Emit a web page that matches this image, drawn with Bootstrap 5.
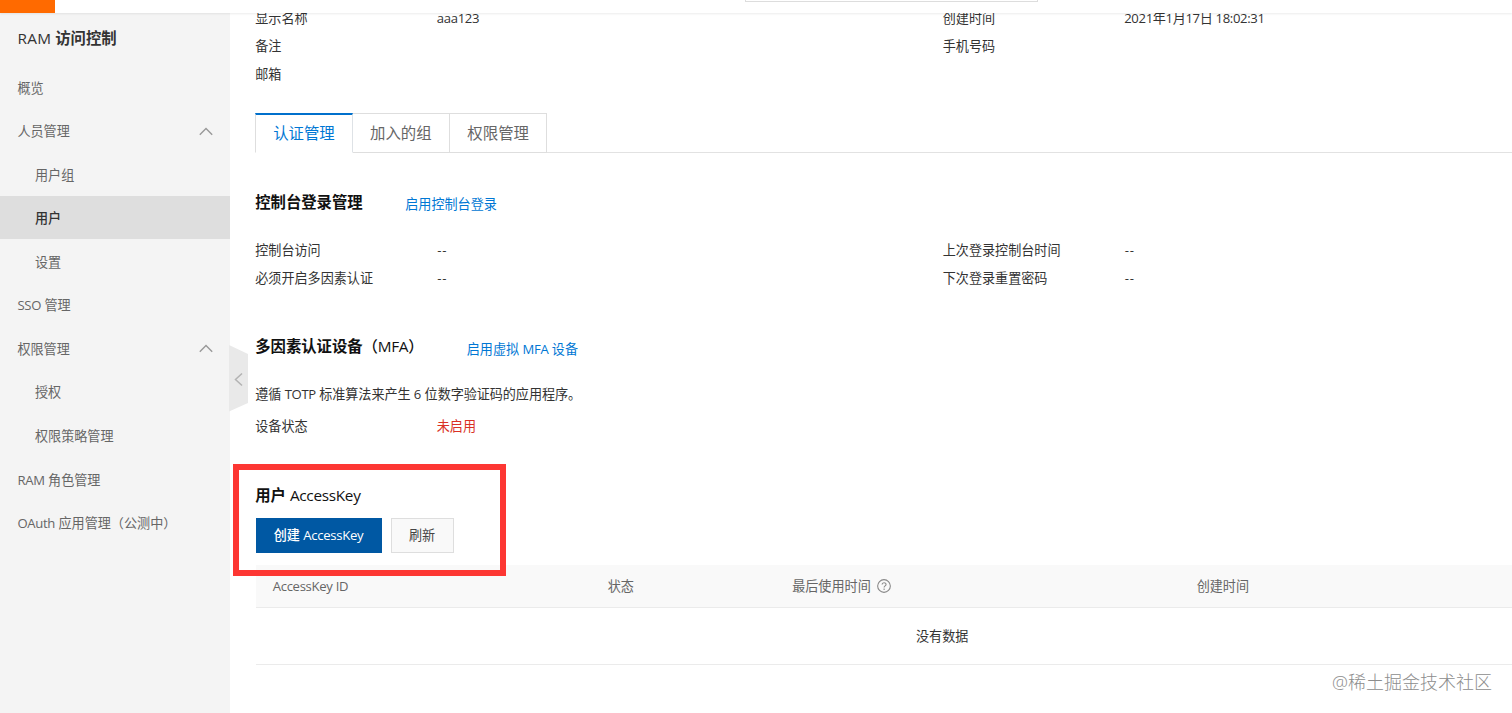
<!DOCTYPE html>
<html lang="zh-CN">
<head>
<meta charset="utf-8">
<meta name="viewport" content="width=device-width, initial-scale=1">
<title>RAM 访问控制</title>
<link href="https://cdn.jsdelivr.net/npm/bootstrap@5.3.0/dist/css/bootstrap.min.css" rel="stylesheet">
<style>
body{height:713px;font-family:"Open Sans","Noto Sans CJK SC",sans-serif;font-size:13.1px;color:#333;line-height:28px}
.lat{letter-spacing:-.3px}
.date-text{letter-spacing:-.34px}
.dash{padding-left:.5px;letter-spacing:.8px}
.topbar{height:13px;z-index:2;box-shadow:0 1px 2px rgba(0,0,0,.08)}
.brand-block{width:55px;background:#ff6a00}
.search-box{width:293px;height:2px;left:745px;border:1px solid #ddd;border-top:0}
.side{width:229.500px;background:#f4f4f4}
.side-title{height:52.300px;padding:11px 0 0 17.400px;font-size:15.350px;font-weight:700;color:#333}
.side-title .lat{font-weight:500;letter-spacing:.3px}
.side .list-group-item{height:43.640px;padding:1px 17px 0 17.400px;background:transparent;color:#666;border:0;border-radius:0}
.side .sub-item{padding-left:35px}
.side .list-group-item.active{background:#dedede;color:#333;font-weight:500;margin-top:-.5px}
.handle{left:229px;top:332px;z-index:1}
.content-area{padding-left:26px}
.info{display:grid;grid-template-columns:181.500px 506px 181.500px 1fr;margin-left:-.3px}
.info.first{margin-top:-9px;height:84px}
.nav-tabs{margin-top:25px;height:40px;margin-left:-.3px;--bs-nav-tabs-border-color:#e2e2e2}
.nav-tabs .nav-link{width:97.300px;height:40px;padding:0;border:1px solid #dedede;border-left:0;border-radius:0;margin:0;font-size:15.400px;color:#666;line-height:39px;text-align:center}
.nav-tabs .nav-link.active{border-left:1px solid #dedede;border-top:2px solid #0070cc;border-bottom-color:#fff;color:#0077d4;width:97.500px;line-height:37px}
.sec{height:30px;font-size:15.350px;font-weight:700;color:#111;line-height:30px;margin-left:-.3px}
.sec .lat{font-weight:500}
.sec a{font-size:13.100px;font-weight:400;color:#0077d4;padding-top:2px}
.danger-text{color:#d93026}
.btn-key{height:35px;border-radius:0;font-size:13.100px;line-height:33px;padding:0}
.btn-create{width:126px;background:#0058a3;color:#fff;font-weight:500}
.btn-refresh{width:63px;background:#f9f9f9;border-color:#dedede;color:#444}
.key-head{height:43px;margin-top:12px;background:#f9f9f9;border-bottom:1px solid #ebebeb;color:#666;display:grid;grid-template-columns:335px 184.500px 404.500px 1fr;padding-left:17.200px;line-height:42px}
.key-empty{height:57px;border-bottom:1px solid #ebebeb;padding-left:660.500px;line-height:56px}
.frame{left:233px;top:464px;width:273px;height:112px;border:6px solid #fd3733;z-index:3}
.wm{right:20px;bottom:17px;font-size:18px;color:#8d8d8d;font-weight:300;line-height:28px}
</style>
</head>
<body class="d-flex flex-column overflow-hidden position-relative bg-white">
<header class="topbar bg-white d-flex flex-shrink-0 position-relative">
  <div class="brand-block"></div>
  <div class="search-box position-absolute top-0"></div>
</header>
<div class="d-flex flex-grow-1 overflow-hidden position-relative">
  <aside class="side flex-shrink-0">
    <div class="side-title"><span class="lat">RAM</span> 访问控制</div>
    <div class="list-group list-group-flush">
      <a class="list-group-item d-flex align-items-center">概览</a>
      <a class="list-group-item d-flex align-items-center justify-content-between">人员管理<svg width="14" height="9" viewBox="0 0 14 9" fill="none" stroke="#999" stroke-width="1.4"><path d="M.8 7.700 7 1.500l6.200 6.200"/></svg></a>
      <a class="list-group-item sub-item d-flex align-items-center">用户组</a>
      <a class="list-group-item sub-item active d-flex align-items-center">用户</a>
      <a class="list-group-item sub-item d-flex align-items-center">设置</a>
      <a class="list-group-item d-flex align-items-center"><span><span class="lat">SSO</span> 管理</span></a>
      <a class="list-group-item d-flex align-items-center justify-content-between">权限管理<svg width="14" height="9" viewBox="0 0 14 9" fill="none" stroke="#999" stroke-width="1.4"><path d="M.8 7.700 7 1.500l6.200 6.200"/></svg></a>
      <a class="list-group-item sub-item d-flex align-items-center">授权</a>
      <a class="list-group-item sub-item d-flex align-items-center">权限策略管理</a>
      <a class="list-group-item d-flex align-items-center"><span><span class="lat">RAM</span> 角色管理</span></a>
      <a class="list-group-item d-flex align-items-center"><span><span class="lat">OAuth</span> 应用管理（公测中）</span></a>
    </div>
  </aside>
  <svg class="handle position-absolute" width="20" height="67" viewBox="0 0 20 67"><path d="M0 0 19 9v49L0 66.500z" fill="#e9e9e9"/><path d="M13 28.500 6.500 34.500l6.500 6" fill="none" stroke="#b3b3b3" stroke-width="1.500"/></svg>
  <main class="content-area flex-grow-1">
    <div class="info first">
      <span>显示名称</span><span class="lat">aaa123</span><span>创建时间</span><span class="date-text">2021年1月17日 18:02:31</span>
      <span>备注</span><span></span><span>手机号码</span><span></span>
      <span>邮箱</span>
    </div>
    <nav class="nav nav-tabs">
      <a class="nav-link active">认证管理</a><a class="nav-link">加入的组</a><a class="nav-link">权限管理</a>
    </nav>
    <div class="sec d-flex" style="margin-top:34px"><span style="width:150px">控制台登录管理</span><a class="text-decoration-none">启用控制台登录</a></div>
    <div class="info" style="margin-top:19px">
      <span>控制台访问</span><span class="dash">--</span><span>上次登录控制台时间</span><span class="dash">--</span>
      <span>必须开启多因素认证</span><span class="dash">--</span><span>下次登录重置密码</span><span class="dash">--</span>
    </div>
    <div class="sec d-flex" style="margin-top:39px"><span style="width:211.500px">多因素认证设备<span class="lat">（MFA）</span></span><a class="text-decoration-none" style="padding-top:3px">启用虚拟 <span class="lat">MFA</span> 设备</a></div>
    <div style="margin-top:19px;margin-left:-.3px;letter-spacing:-.06px">遵循 <span class="lat">TOTP</span> 标准算法来产生 6 位数字验证码的应用程序。</div>
    <div class="info" style="margin-top:4px"><span>设备状态</span><span class="danger-text">未启用</span></div>
    <div class="sec" style="margin-top:40px">用户 <span class="lat">AccessKey</span></div>
    <div class="d-flex" style="gap:9px;margin-top:8px">
      <button class="btn btn-key btn-create">创建 <span class="lat">AccessKey</span></button>
      <button class="btn btn-key btn-refresh">刷新</button>
    </div>
    <div class="key-head">
      <span class="lat">AccessKey ID</span><span>状态</span>
      <span class="d-flex align-items-center">最后使用时间<svg style="margin-left:6px" width="14" height="14" viewBox="0 0 13 13" fill="none" stroke="#888"><circle cx="6.500" cy="6.500" r="5.900"/><path d="M4.700 5.200c0-2.400 3.700-2.300 3.700-.2 0 1.300-1.800 1.400-1.800 2.800M6.600 8.900v1.200"/></svg></span>
      <span>创建时间</span>
    </div>
    <div class="key-empty">没有数据</div>
  </main>
</div>
<div class="frame position-absolute"></div>
<div class="wm position-absolute">@稀土掘金技术社区</div>
<script src="https://cdn.jsdelivr.net/npm/bootstrap@5.3.0/dist/js/bootstrap.bundle.min.js"></script>
</body>
</html>
